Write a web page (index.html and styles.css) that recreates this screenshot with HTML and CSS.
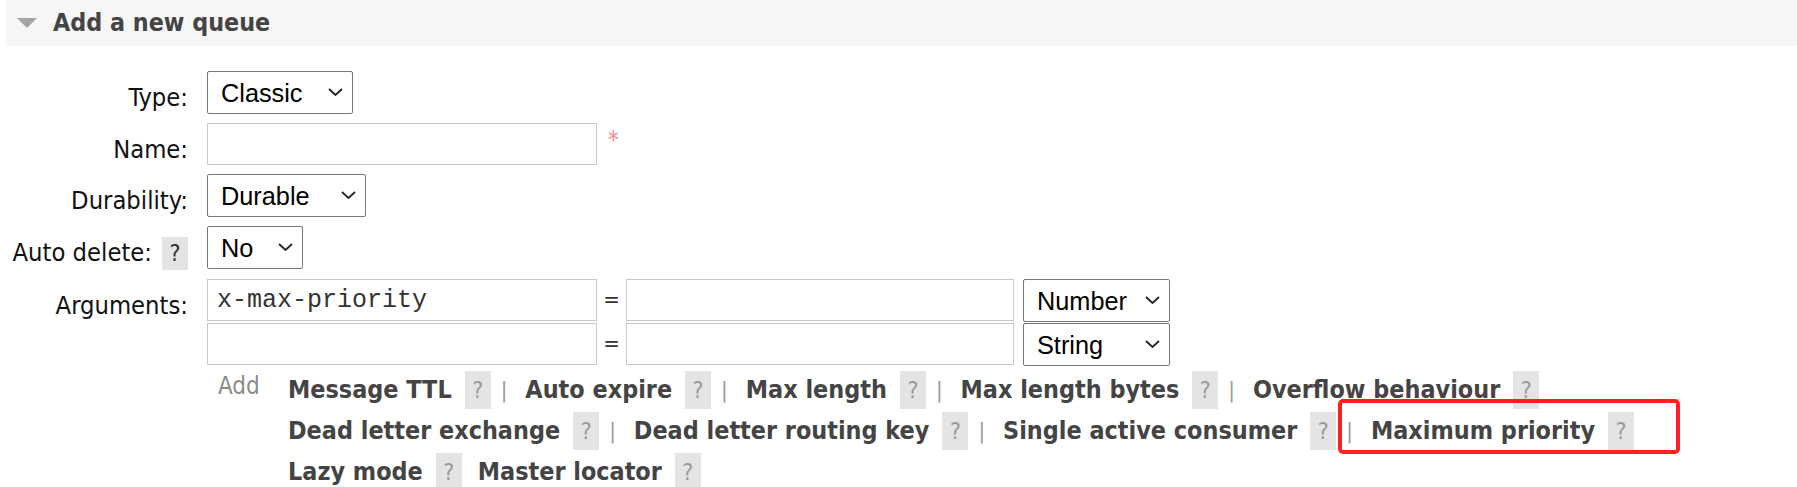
FILE: index.html
```html
<!DOCTYPE html>
<html>
<head>
<meta charset="utf-8">
<link rel="stylesheet" href="styles.css">
</head>
<body>
<div class="page">
  <div class="section-head">
    <span class="tri"></span>
    <h2 class="title">Add a new queue</h2>
  </div>

  <div class="form">
    <div class="row">
      <div class="lbl"><span class="lbl-text">Type:</span></div>
      <div class="ctl">
        <div class="sel w-classic">
          <select><option>Classic</option></select>
          <svg class="chev" viewBox="0 0 15 8" width="15" height="8"><path d="M1 1 L7.5 7 L14 1" fill="none" stroke="#222" stroke-width="1.8"/></svg>
        </div>
      </div>
    </div>

    <div class="row">
      <div class="lbl"><span class="lbl-text">Name:</span></div>
      <div class="ctl">
        <input class="txt w-key" type="text">
        <span class="req">*</span>
      </div>
    </div>

    <div class="row">
      <div class="lbl"><span class="lbl-text">Durability:</span></div>
      <div class="ctl">
        <div class="sel w-durable">
          <select><option>Durable</option></select>
          <svg class="chev" viewBox="0 0 15 8" width="15" height="8"><path d="M1 1 L7.5 7 L14 1" fill="none" stroke="#222" stroke-width="1.8"/></svg>
        </div>
      </div>
    </div>

    <div class="row">
      <div class="lbl"><span class="lbl-text">Auto delete:</span><span class="help help-lbl">?</span></div>
      <div class="ctl">
        <div class="sel w-no">
          <select><option>No</option></select>
          <svg class="chev" viewBox="0 0 15 8" width="15" height="8"><path d="M1 1 L7.5 7 L14 1" fill="none" stroke="#222" stroke-width="1.8"/></svg>
        </div>
      </div>
    </div>

    <div class="row">
      <div class="lbl"><span class="lbl-text">Arguments:</span></div>
      <div class="ctl args">
        <div class="arg-row">
          <input class="txt w-key" type="text" value="x-max-priority">
          <span class="eq">=</span>
          <input class="txt w-val" type="text">
          <div class="sel w-type">
            <select><option>Number</option></select>
            <svg class="chev" viewBox="0 0 15 8" width="15" height="8"><path d="M1 1 L7.5 7 L14 1" fill="none" stroke="#222" stroke-width="1.8"/></svg>
          </div>
        </div>
        <div class="arg-row">
          <input class="txt w-key" type="text">
          <span class="eq">=</span>
          <input class="txt w-val" type="text">
          <div class="sel w-type">
            <select><option>String</option></select>
            <svg class="chev" viewBox="0 0 15 8" width="15" height="8"><path d="M1 1 L7.5 7 L14 1" fill="none" stroke="#222" stroke-width="1.8"/></svg>
          </div>
        </div>
        <div class="add-row">
          <span class="add">Add</span>
          <div class="links">
            <div class="link-line">
              <span class="arg">Message TTL</span><span class="help">?</span><span class="sep">|</span>
              <span class="arg">Auto expire</span><span class="help">?</span><span class="sep">|</span>
              <span class="arg">Max length</span><span class="help">?</span><span class="sep">|</span>
              <span class="arg">Max length bytes</span><span class="help">?</span><span class="sep">|</span>
              <span class="arg">Overflow behaviour</span><span class="help">?</span>
            </div>
            <div class="link-line">
              <span class="arg">Dead letter exchange</span><span class="help">?</span><span class="sep">|</span>
              <span class="arg">Dead letter routing key</span><span class="help">?</span><span class="sep">|</span>
              <span class="arg">Single active consumer</span><span class="help">?</span><span class="sep">|</span>
              <span class="arg">Maximum priority</span><span class="help">?</span>
            </div>
            <div class="link-line">
              <span class="arg">Lazy mode</span><span class="help help-gap">?</span>
              <span class="arg">Master locator</span><span class="help">?</span>
            </div>
          </div>
        </div>
      </div>
    </div>
  </div>

  <div class="highlight"></div>
</div>
</body>
</html>
```

FILE: styles.css
```css
html, body {
  margin: 0;
  padding: 0;
  background: #fff;
}

.page {
  position: relative;
  padding-left: 6px;
  font-family: "DejaVu Sans Condensed", "DejaVu Sans", sans-serif;
  font-stretch: semi-condensed;
  color: #222;
}

.section-head {
  display: flex;
  align-items: center;
  height: 46px;
  background: #f6f6f6;
  padding-left: 11px;
}

.tri {
  width: 0;
  height: 0;
  border-left: 10px solid transparent;
  border-right: 10px solid transparent;
  border-top: 10px solid #a3a3a3;
  margin-right: 16px;
}

.title {
  margin: 0;
  font-size: 24.8px;
  font-weight: bold;
  color: #444;
  line-height: 46px;
}

.form {
  margin-top: 25px;
  display: flex;
  flex-direction: column;
  gap: 9px;
}

.row {
  display: flex;
  align-items: flex-start;
}

.lbl {
  width: 182px;
  flex: none;
  display: flex;
  justify-content: flex-end;
  align-items: flex-start;
  margin-right: 19px;
}

.lbl-text {
  font-size: 25.3px;
  line-height: 30px;
  padding-top: 12px;
  color: #111;
  white-space: nowrap;
}

.ctl {
  display: flex;
  align-items: flex-start;
}

.args {
  flex-direction: column;
}

.arg-row {
  display: flex;
  align-items: flex-start;
  margin-bottom: 1px;
}

.sel {
  position: relative;
  display: inline-block;
  height: 43px;
}

.sel select {
  appearance: none;
  -webkit-appearance: none;
  width: 100%;
  height: 43px;
  box-sizing: border-box;
  border: 1px solid #767676;
  border-radius: 2px;
  background: #fff;
  font-family: "Liberation Sans", Arial, sans-serif;
  font-size: 25.3px;
  color: #000;
  padding: 0 0 0 13px;
  margin: 0;
}

.chev {
  position: absolute;
  right: 10px;
  top: 17px;
  pointer-events: none;
}

.w-classic { width: 146px; }
.w-durable { width: 159px; }
.w-no { width: 96px; }
.w-type { width: 147px; margin-left: 9px; }

.txt {
  height: 42px;
  box-sizing: border-box;
  border: 1px solid #c8c8c8;
  background: #fff;
  padding: 0 9px;
  margin: 0;
  font-family: "Liberation Mono", "Courier New", monospace;
  font-size: 25px;
  color: #333;
  outline: none;
}

.w-key { width: 390px; }
.w-val { width: 388px; }

.eq {
  width: 29px;
  flex: none;
  text-align: center;
  font-size: 22px;
  line-height: 42px;
  color: #333;
}

.req {
  margin-left: 11px;
  margin-top: 2px;
  color: #f88;
  font-size: 24px;
  line-height: 30px;
}

.help {
  display: inline-block;
  flex: none;
  width: 26px;
  height: 38px;
  line-height: 38px;
  text-align: center;
  background: #e4e4e4;
  color: #9a9a9a;
  font-size: 23px;
  font-weight: normal;
}

.help-lbl {
  height: 33px;
  line-height: 33px;
  margin-top: 11px;
  margin-left: 10px;
  color: #333;
}

.add-row {
  display: flex;
  align-items: flex-start;
  margin-top: 4px;
}

.add {
  width: 70px;
  flex: none;
  padding-left: 11px;
  font-size: 24px;
  line-height: 30px;
  color: #8a8a8a;
}

.links {
  display: flex;
  flex-direction: column;
  gap: 3px;
}

.link-line {
  display: flex;
  align-items: center;
  height: 38px;
  white-space: nowrap;
}

.arg {
  font-size: 24.9px;
  font-weight: bold;
  color: #444;
  line-height: 38px;
  margin-right: 13px;
}

.sep {
  font-size: 22px;
  color: #999;
  line-height: 38px;
  margin-left: 10px;
  margin-right: 18px;
}

.help-gap {
  margin-right: 16px;
}

.highlight {
  position: absolute;
  left: 1338px;
  top: 399px;
  width: 342px;
  height: 55px;
  box-sizing: border-box;
  border: 4px solid #ff2020;
  border-radius: 5px;
  pointer-events: none;
}
```
